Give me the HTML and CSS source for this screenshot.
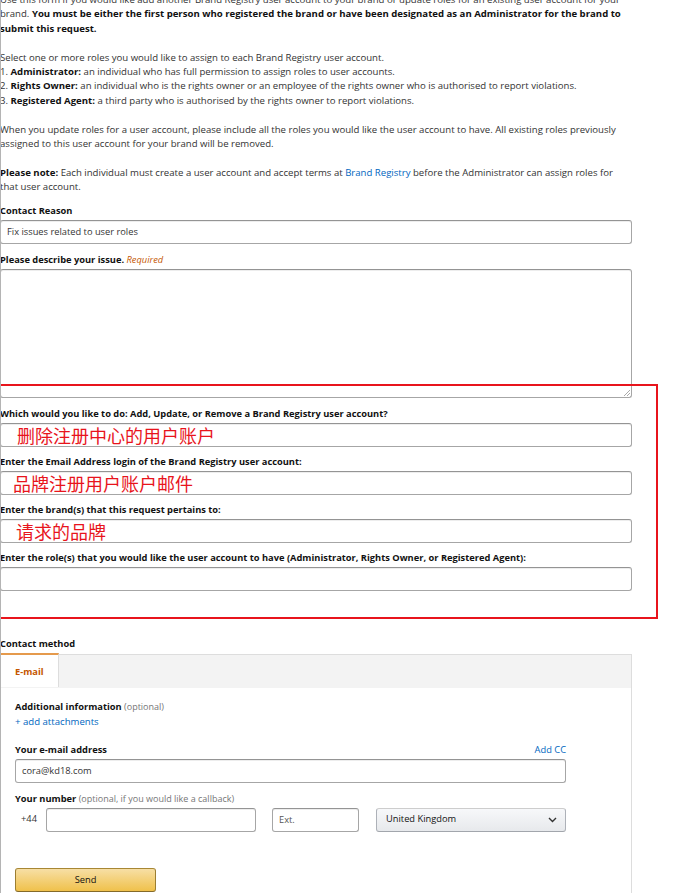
FILE: index.html
```html
<!DOCTYPE html>
<html lang="en">
<head>
    <meta charset="UTF-8">
    <title>Brand Registry - Contact</title>
    <link rel="stylesheet" href="styles.css">
</head>
<body>
    <div id="page">
        <div id="intro">
            <p>Use this form if you would like add another Brand Registry user account to your brand or update roles for an existing user account for your brand. <b>You must be either the first person who registered the brand or have been designated as an Administrator for the brand to submit this request.</b></p>
            <p>Select one or more roles you would like to assign to each Brand Registry user account.<br>
            1. <b>Administrator:</b> an individual who has full permission to assign roles to user accounts.<br>
            2. <b>Rights Owner:</b> an individual who is the rights owner or an employee of the rights owner who is authorised to report violations.<br>
            3. <b>Registered Agent:</b> a third party who is authorised by the rights owner to report violations.</p>
            <p>When you update roles for a user account, please include all the roles you would like the user account to have. All existing roles previously assigned to this user account for your brand will be removed.</p>
            <p><b>Please note:</b> Each individual must create a user account and accept terms at <a href="#">Brand Registry</a> before the Administrator can assign roles for that user account.</p>
        </div>

        <div class="field">
            <div class="label">Contact Reason</div>
            <div class="input">Fix issues related to user roles</div>
        </div>
        <div class="field">
            <div class="label">Please describe your issue. <i class="req">Required</i></div>
            <div class="textarea"></div>
        </div>

        <div id="roles">
            <div class="field">
                <div class="label">Which would you like to do: Add, Update, or Remove a Brand Registry user account?</div>
                <div class="input"><span class="note n1">删除注册中心的用户账户</span></div>
            </div>
            <div class="field">
                <div class="label">Enter the Email Address login of the Brand Registry user account:</div>
                <div class="input"><span class="note n2">品牌注册用户账户邮件</span></div>
            </div>
            <div class="field">
                <div class="label">Enter the brand(s) that this request pertains to:</div>
                <div class="input"><span class="note n3">请求的品牌</span></div>
            </div>
            <div class="field">
                <div class="label">Enter the role(s) that you would like the user account to have (Administrator, Rights Owner, or Registered Agent):</div>
                <div class="input"></div>
            </div>
            <div id="mark"></div>
        </div>

        <div class="label" id="method-title">Contact method</div>
        <div id="tabs">
            <div id="tab-bar">
                <div class="tab selected">E-mail</div>
            </div>
            <div id="tab-body">
                <div class="label">Additional information <span class="hint">(optional)</span></div>
                <a href="#" class="attach">+ add attachments</a>

                <div class="label row-label">
                    <span>Your e-mail address</span>
                    <a href="#">Add CC</a>
                </div>
                <div class="input mail">cora@kd18.com</div>

                <div class="label num-label">Your number <span class="hint">(optional, if you would like a callback)</span></div>
                <div id="phone">
                    <span class="code">+44</span>
                    <div class="input number"></div>
                    <div class="input ext">Ext.</div>
                    <div class="select">
                        <span>United Kingdom</span>
                        <svg width="9" height="6" viewBox="0 0 9 6"><path d="M1 1l3.5 3.5L8 1" fill="none" stroke="#333" stroke-width="1.4"/></svg>
                    </div>
                </div>

                <div class="send">Send</div>
            </div>
        </div>
    </div>
</body>
</html>
```

FILE: styles.css
```css
*{
    margin: 0;
    padding: 0;
    box-sizing: border-box;
}
html, body{
    height: 100%;
    overflow: hidden;
}
body{
    background: #fff;
    font-family: "Open Sans", "Noto Sans", sans-serif;
    font-size: 9.3px;
    line-height: 14.4px;
    color: #333;
    border-left: 1px solid #b4b4b4;
}
a{
    color: #0066c0;
    text-decoration: none;
}
b{
    color: #111;
}

#page{
    width: 632px;
    margin-left: -1px;
    margin-top: -7px;
}

#intro{
    font-size: 9.6px;
}
#intro p{
    margin-bottom: 14.4px;
}
#intro p:last-child{
    margin-bottom: 9px;
}

.label{
    font-weight: bold;
    color: #111;
    line-height: 14px;
}
.req{
    font-weight: normal;
    color: #c45500;
}
.hint{
    font-weight: normal;
    color: #767676;
    font-size: 9px;
}

.field{
    margin-bottom: 9px;
}
.field .label{
    margin-bottom: 2px;
}
.input{
    height: 24px;
    border: 1px solid #a6a6a6;
    border-top-color: #949494;
    border-radius: 3px;
    box-shadow: inset 0 1px 0 rgba(0,0,0,.07);
    padding: 0 6px;
    line-height: 22px;
    color: #333;
    background: #fff;
}
.textarea{
    height: 129px;
    border: 1px solid #a6a6a6;
    border-top-color: #949494;
    border-radius: 3px;
    box-shadow: inset 0 1px 0 rgba(0,0,0,.07);
    position: relative;
}
.textarea:after{
    content: '';
    position: absolute;
    right: 1px;
    bottom: 1px;
    width: 6px;
    height: 6px;
    background: linear-gradient(135deg, transparent 45%, #aaa 45%, #aaa 55%, transparent 55%, transparent 70%, #aaa 70%, #aaa 80%, transparent 80%);
}

#roles{
    position: relative;
    padding-bottom: 38px;
}
#roles .field{
    margin-bottom: 8px;
}
#mark{
    position: absolute;
    left: -4px;
    top: -23px;
    width: 662px;
    height: 235px;
    border: 2px solid #e8141c;
    pointer-events: none;
}
.note{
    font-family: "Noto Sans CJK SC", sans-serif;
    font-size: 18px;
    color: #e8141c;
    line-height: 22px;
    display: inline-block;
}
.n1{ margin-left: 10px; }
.n2{ margin-left: 6px; }
.n3{ margin-left: 9px; }

#method-title{
    margin-bottom: 3px;
}

#tabs{
    width: 632px;
    height: 260px;
    border: 1px solid #ddd;
    border-top: 0;
}
#tab-bar{
    height: 34px;
    background: #f3f3f3;
    border-top: 1px solid #ddd;
    display: flex;
}
.tab{
    width: 58px;
    height: 34px;
    margin-top: -2px;
    padding-top: 10px;
    padding-left: 14px;
    background: #fff;
    border-top: 2px solid #e59a4c;
    border-right: 1px solid #ddd;
    color: #c45500;
    font-weight: bold;
}

#tab-body{
    padding: 12px 0 0 14px;
    width: 566px;
}
.attach{
    display: block;
    font-size: 9.6px;
    line-height: 15px;
    margin-bottom: 14px;
}
.row-label{
    display: flex;
    justify-content: space-between;
    margin-bottom: 2px;
}
.row-label a{
    font-weight: normal;
    margin-right: 1px;
}
.mail{
    width: 551px;
    margin-bottom: 9px;
}
.num-label{
    margin-bottom: 2px;
}

#phone{
    display: flex;
    align-items: center;
    width: 551px;
    margin-bottom: 36px;
}
.code{
    width: 31px;
    padding-left: 6px;
}
.number{
    width: 210px;
}
.ext{
    width: 87px;
    margin-left: 16px;
    color: #555;
}
.select{
    width: 190px;
    height: 24px;
    margin-left: 17px;
    border: 1px solid #adb1b8;
    border-color: #cdcdcd #adb1b8 #a2a6ac;
    border-radius: 3px;
    background: linear-gradient(#f7f8fa, #e7e9ec);
    display: flex;
    align-items: center;
    justify-content: space-between;
    padding: 0 8px 0 9px;
    color: #111;
}

.send{
    width: 141px;
    height: 24px;
    border: 1px solid #a88734;
    border-color: #a88734 #9c7e31 #846a29;
    border-radius: 3px;
    background: linear-gradient(#f7dfa5, #f0c14b);
    text-align: center;
    line-height: 22px;
    color: #111;
}
```
